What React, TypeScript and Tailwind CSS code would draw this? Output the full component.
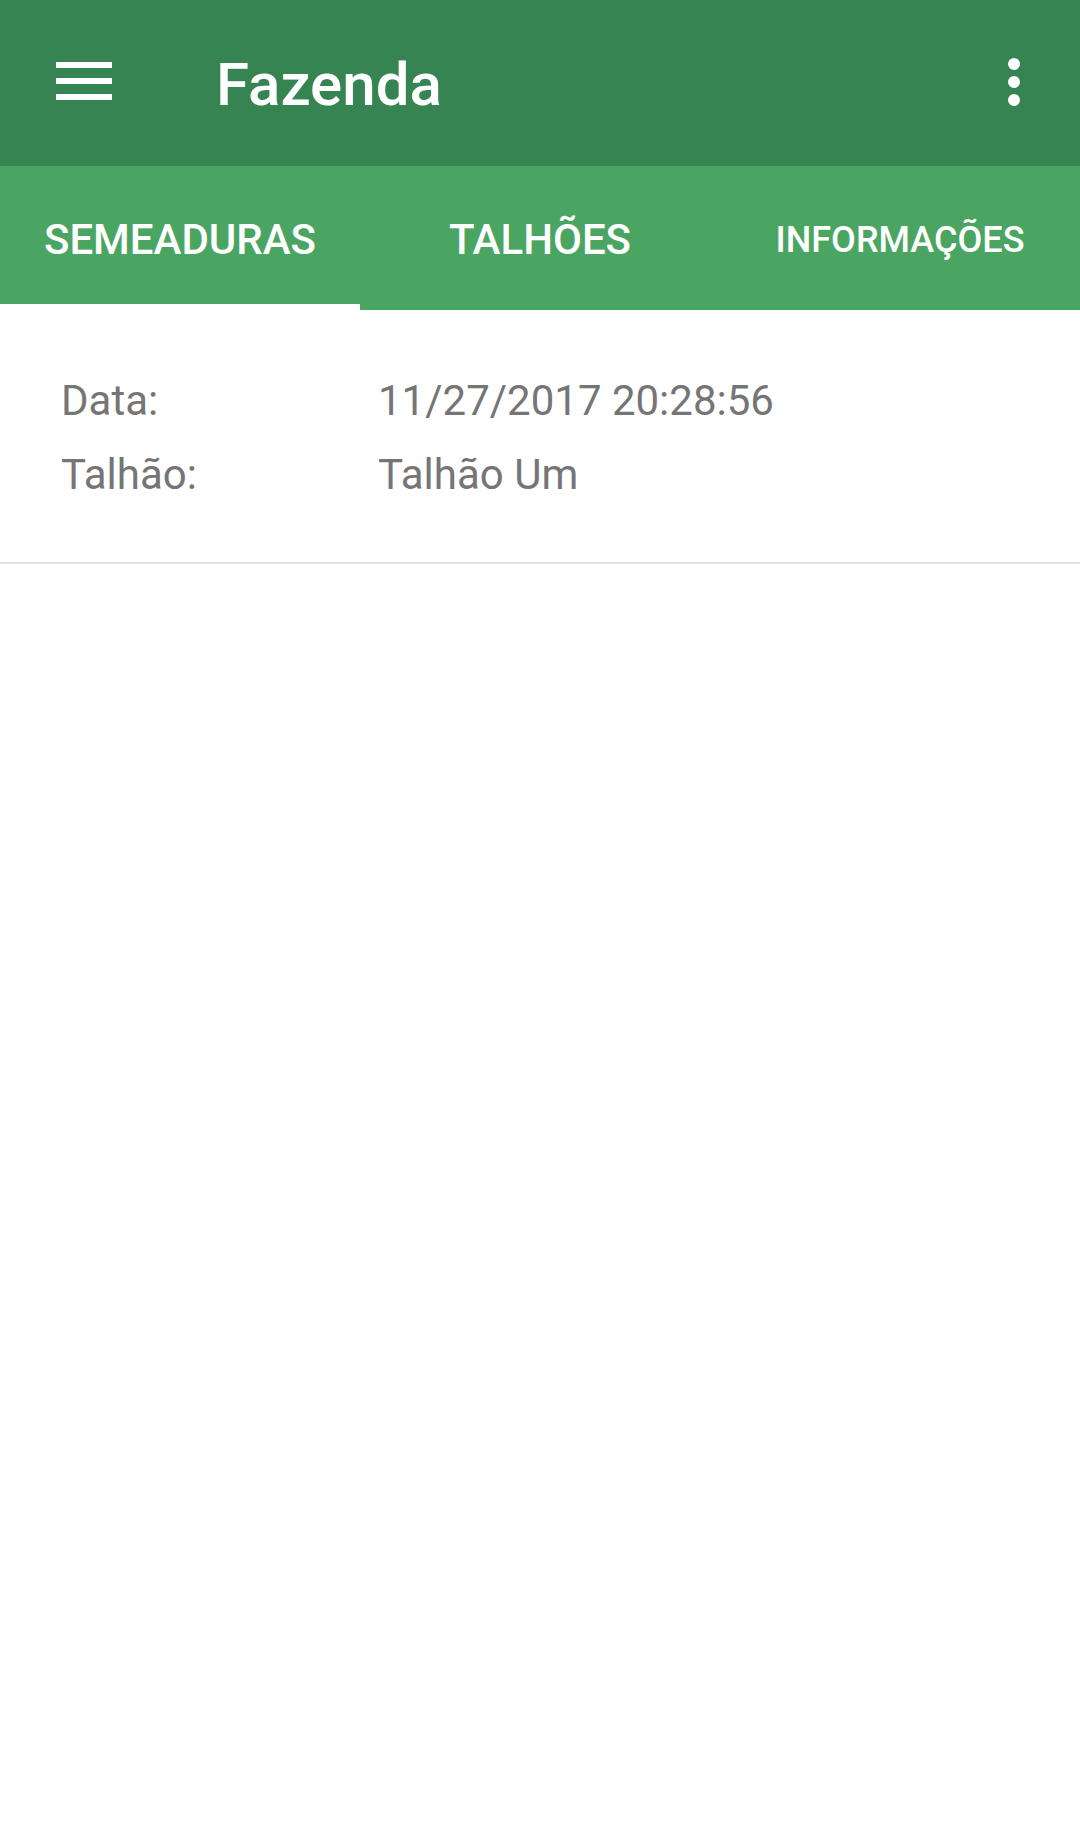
import React from "react";

function MenuIcon() {
  return (
    <svg width="56" height="38" viewBox="0 0 56 38" className="block">
      <rect x="0" y="0" width="56" height="6" fill="#fff" />
      <rect x="0" y="16" width="56" height="6" fill="#fff" />
      <rect x="0" y="32" width="56" height="6" fill="#fff" />
    </svg>
  );
}

function MoreIcon() {
  return (
    <svg width="12" height="48" viewBox="0 0 12 48" className="block">
      <circle cx="6" cy="6" r="6" fill="#fff" />
      <circle cx="6" cy="24" r="6" fill="#fff" />
      <circle cx="6" cy="42" r="6" fill="#fff" />
    </svg>
  );
}

export default function App() {
  return (
    <div
      className="w-[1080px] h-[1846px] bg-white flex flex-col"
      style={{ fontFamily: "Roboto, 'Noto Sans', sans-serif" }}
    >
      <header className="h-[166px] bg-[#378453] flex items-start shrink-0">
        <div className="ml-[56px] mt-[62px]">
          <MenuIcon />
        </div>
        <div className="ml-[104px] mt-[55px] text-white text-[60px] leading-[60px] font-medium">
          Fazenda
        </div>
        <div className="ml-auto mr-[60px] mt-[58px]">
          <MoreIcon />
        </div>
      </header>

      <nav className="h-[144px] bg-[#4ba562] grid grid-cols-3 shrink-0">
        <div className="relative flex items-center justify-center pt-[3px]">
          <span className="text-white text-[42px] leading-[42px] font-medium">SEMEADURAS</span>
          <div className="absolute left-0 right-0 bottom-0 h-[6px] bg-white" />
        </div>
        <div className="flex items-center justify-center pt-[3px]">
          <span className="text-white text-[42px] leading-[42px] font-medium">TALHÕES</span>
        </div>
        <div className="flex items-center justify-center pt-[3px]">
          <span className="text-white text-[36px] leading-[36px] font-medium">INFORMAÇÕES</span>
        </div>
      </nav>

      <section className="pt-[54px] pb-[50px] border-b-2 border-[#e2e2e2] text-[#757575] text-[42px] leading-[74px]">
        <div className="flex">
          <div className="w-[378px] pl-[61px]">Data:</div>
          <div>11/27/2017 20:28:56</div>
        </div>
        <div className="flex">
          <div className="w-[378px] pl-[61px]">Talhão:</div>
          <div>Talhão Um</div>
        </div>
      </section>
    </div>
  );
}
